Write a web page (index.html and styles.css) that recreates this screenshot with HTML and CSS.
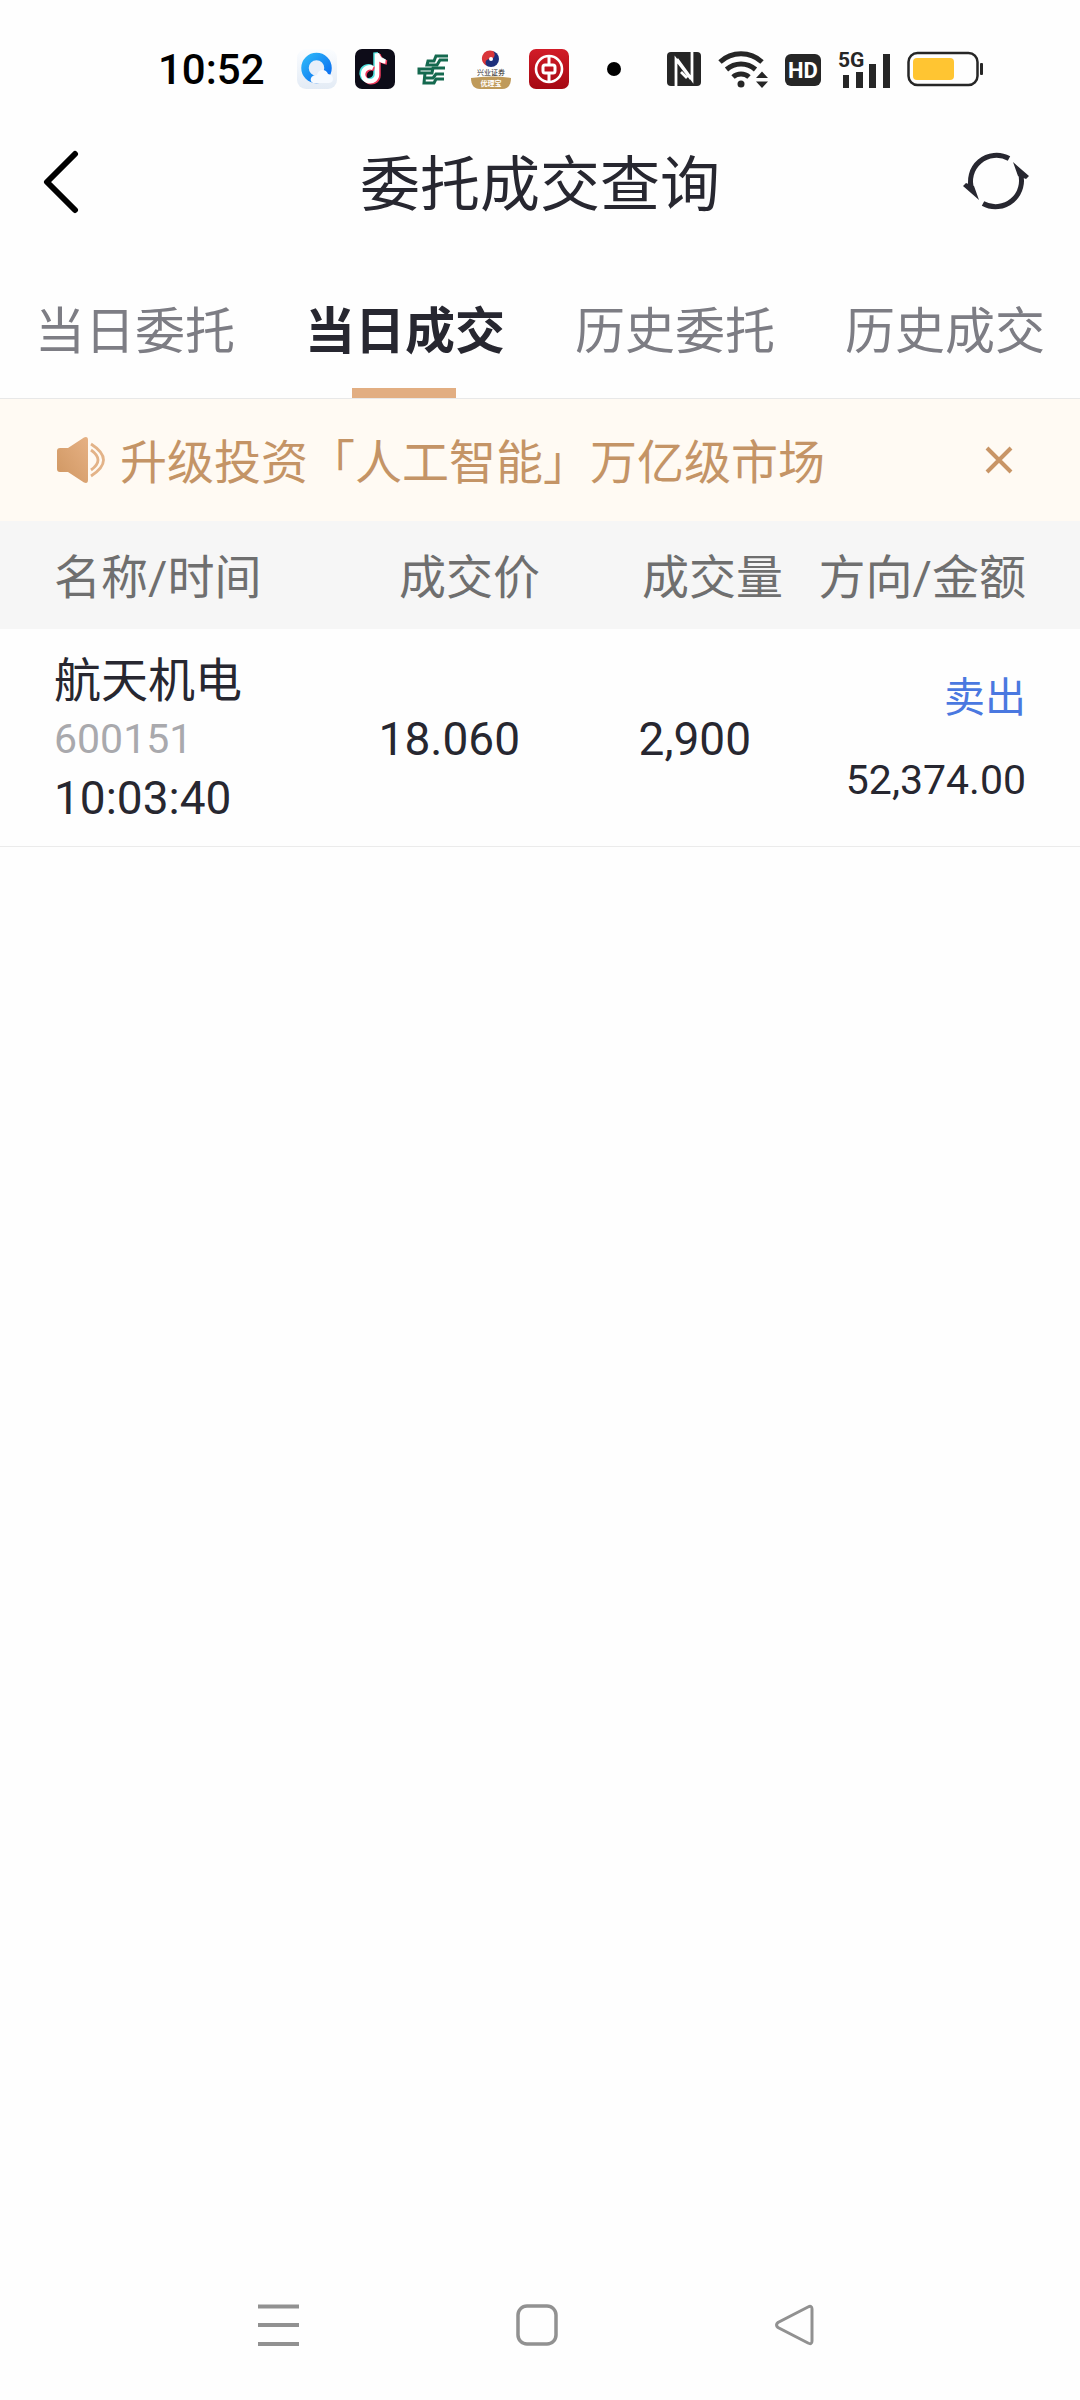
FILE: index.html
```html
<!DOCTYPE html>
<html lang="zh-CN">
<head>
  <meta charset="utf-8">
  <meta name="viewport" content="width=device-width">
  <title>委托成交查询</title>
  <link rel="stylesheet" href="styles.css">
</head>
<body>
  <div class="status-bar">
    <div class="status-left">
      <span class="clock">10:52</span>
      <!-- browser -->
      <svg class="app-icon" viewBox="0 0 40 40">
        <defs>
          <linearGradient id="ring" x1="0" y1="0" x2="1" y2="1">
            <stop offset="0" stop-color="#2cb4f8"/>
            <stop offset="1" stop-color="#0a6cf0"/>
          </linearGradient>
          <linearGradient id="tile" x1="0" y1="0" x2="0" y2="1">
            <stop offset="0" stop-color="#fbfdff"/>
            <stop offset="1" stop-color="#e3ebf5"/>
          </linearGradient>
        </defs>
        <rect width="40" height="40" rx="9" fill="url(#tile)"/>
        <circle cx="19.500" cy="19" r="11.500" fill="#e8effa" stroke="url(#ring)" stroke-width="7.500"/>
        <path d="M16 34c-5-3-1-9 4-8 1-6 9-7 11-1 6 0 7 9 1 9z" fill="#f6faff"/>
      </svg>
      <!-- short video -->
      <svg class="app-icon" viewBox="0 0 40 40">
        <rect width="40" height="40" rx="7" fill="#0d0c18"/>
        <g fill="none" stroke-width="4.500">
          <path d="M18 19a7 7 0 1 0 4 6.500V4.500c1 5 4 7.500 8.500 8" stroke="#4fe0dc" transform="translate(-1.500 -1)"/>
          <path d="M18 19a7 7 0 1 0 4 6.500V4.500c1 5 4 7.500 8.500 8" stroke="#f03a5c" transform="translate(1.500 1)"/>
          <path d="M18 19a7 7 0 1 0 4 6.500V4.500c1 5 4 7.500 8.500 8" stroke="#fff"/>
        </g>
      </svg>
      <!-- postal bank -->
      <svg class="app-icon" viewBox="0 0 40 40" fill="none" stroke="#14694f" stroke-width="3">
        <path d="M35 7H23l-2 5h-6l-1 4h10l3-5h8"/>
        <path d="M32 19H20l-1 5H6v-4h14"/>
        <path d="M12 24l-1 10h10l2-4h8"/>
        <path d="M13 29h7l3-4h8"/>
      </svg>
      <!-- securities -->
      <svg class="app-icon" viewBox="0 0 40 40">
        <circle cx="20" cy="10" r="8" fill="#1d2f7c"/>
        <path d="M22 2a8 8 0 1 0-6 15c-3-4-1-7 3-7 5 0 6-5 3-8z" fill="#d9363a"/>
        <circle cx="20" cy="10" r="2" fill="#fff"/>
        <text class="broker-name" x="20" y="26" text-anchor="middle">兴业证券</text>
        <path d="M0 29q20-3 40 0c0 7-3 11-9 11H9c-6 0-9-4-9-11z" fill="#bf9a5a"/>
        <text class="broker-tag" x="20" y="37" text-anchor="middle">优理宝</text>
      </svg>
      <!-- bank of china -->
      <svg class="app-icon" viewBox="0 0 40 40">
        <defs>
          <linearGradient id="red" x1="0" y1="0" x2="0" y2="1">
            <stop offset="0" stop-color="#d21c28"/>
            <stop offset="1" stop-color="#a50812"/>
          </linearGradient>
        </defs>
        <rect width="40" height="40" rx="7" fill="url(#red)"/>
        <g fill="none" stroke="#fff">
          <circle cx="20" cy="20" r="13" stroke-width="2.600"/>
          <rect x="14" y="16" width="12" height="8" rx="2" stroke-width="3"/>
          <path d="M20 7v8M20 24v9" stroke-width="3"/>
        </g>
      </svg>
      <span class="more-dot"></span>
    </div>
    <div class="status-right">
      <!-- nfc -->
      <svg width="34" height="36" viewBox="0 0 34 36">
        <rect y="1" width="34" height="34" rx="4" fill="#262626"/>
        <path d="M9 35V8.500L24 28M25 1v27.500L10 8M14 21l6 6" fill="none" stroke="#fff" stroke-width="2.800"/>
      </svg>
      <!-- wifi -->
      <svg width="50" height="38" viewBox="0 0 50 38">
        <g fill="none" stroke="#262626" stroke-width="5">
          <path d="M2 12a31 31 0 0 1 42 0"/>
          <path d="M8.500 19.500a22 22 0 0 1 29 0"/>
          <path d="M15 27a12 12 0 0 1 16 0"/>
        </g>
        <circle cx="23" cy="34" r="3.500" fill="#262626"/>
        <path d="M38 28l6-6.500 6 6.500zM38 31.500h12L44 38z" fill="#262626"/>
      </svg>
      <!-- hd -->
      <svg width="36" height="36" viewBox="0 0 36 36">
        <rect y="3" width="36" height="32" rx="6" fill="#262626"/>
        <text class="hd-text" x="18" y="27" text-anchor="middle">HD</text>
      </svg>
      <!-- signal -->
      <svg width="52" height="44" viewBox="0 -4 52 44">
        <text class="net-text" x="0" y="16">5G</text>
        <path d="M5 24h6v13H5zM18 21h7v16h-7zM31 13h7v24h-7zM45 3h7v34h-7z" fill="#262626"/>
      </svg>
      <!-- battery -->
      <svg width="76" height="36" viewBox="0 0 76 36">
        <rect x="1.500" y="2" width="69" height="32" rx="9" fill="none" stroke="#262626" stroke-width="2.500"/>
        <rect x="6" y="7" width="41" height="22" rx="4" fill="#ffc532"/>
        <rect x="73" y="12" width="3" height="12" rx="1" fill="#262626"/>
      </svg>
    </div>
  </div>

  <header class="title-bar">
    <button class="icon-button back" aria-label="返回">
      <svg width="40" height="64" viewBox="0 0 40 64">
        <path d="M34 4L6 32l28 28" fill="none" stroke="#000" stroke-width="6" stroke-linecap="round" stroke-linejoin="round"/>
      </svg>
    </button>
    <h1>委托成交查询</h1>
    <button class="icon-button refresh" aria-label="刷新">
      <svg width="66" height="60" viewBox="0 0 66 60" fill="none" stroke="#272730" stroke-width="5">
        <path d="M46 6.500A26 26 0 0 0 9 38"/>
        <path d="M20 51.500A26 26 0 0 0 57 20"/>
        <path d="M3 31l-3 3 16 14-5-14-3-1z" fill="#272730" stroke="none"/>
        <path d="M63 27l3-3-16-14 5 14 3 1z" fill="#272730" stroke="none"/>
      </svg>
    </button>
  </header>

  <nav class="tabs">
    <a class="tab" href="#">当日委托</a>
    <a class="tab active" href="#">当日成交</a>
    <a class="tab" href="#">历史委托</a>
    <a class="tab" href="#">历史成交</a>
  </nav>

  <div class="notice">
    <svg width="50" height="48" viewBox="0 0 50 48">
      <defs>
        <linearGradient id="horn" x1="1" y1="0" x2="0" y2="1">
          <stop offset="0" stop-color="#e6b184"/>
          <stop offset="1" stop-color="#cf9661"/>
        </linearGradient>
      </defs>
      <path d="M4 12h8L28 1.500Q32 0 32 4v40q0 4-4 2.500L12 36H4q-3 0-3-3V15q0-3 3-3z" fill="url(#horn)"/>
      <path d="M35 14q14 10 0 20M35 8q25 16 0 32" fill="none" stroke="#e3b388" stroke-width="2.800"/>
    </svg>
    <a class="notice-text" href="#">升级投资「人工智能」万亿级市场</a>
    <button class="icon-button" aria-label="关闭">
      <svg width="28" height="28" viewBox="0 0 28 28">
        <path d="M2 2l24 24M26 2L2 26" stroke="#c89566" stroke-width="4"/>
      </svg>
    </button>
  </div>

  <table class="deals">
    <thead>
      <tr>
        <th>名称/时间</th>
        <th>成交价</th>
        <th>成交量</th>
        <th>方向/金额</th>
      </tr>
    </thead>
    <tbody>
      <tr>
        <td>
          <div class="line">航天机电</div>
          <div class="line code">600151</div>
          <div class="line time">10:03:40</div>
        </td>
        <td class="price">18.060</td>
        <td class="volume">2,900</td>
        <td>
          <div class="side sell">卖出</div>
          <div class="side">52,374.00</div>
        </td>
      </tr>
    </tbody>
  </table>

  <div class="system-nav">
    <button class="icon-button" aria-label="最近任务">
      <svg width="42" height="42" viewBox="0 0 42 42">
        <path d="M0 2.500h41M0 21h41M0 40h41" stroke="#919191" stroke-width="4"/>
      </svg>
    </button>
    <button class="icon-button" aria-label="主屏幕">
      <svg width="42" height="42" viewBox="0 0 42 42">
        <rect x="2" y="2" width="38" height="38" rx="9" fill="none" stroke="#919191" stroke-width="3.500"/>
      </svg>
    </button>
    <button class="icon-button" aria-label="返回上一页">
      <svg width="42" height="42" viewBox="0 0 42 42">
        <path d="M34 3L4 18.500q-3 2.500 0 5L34 39q4 2 4-2V5q0-4-4-2z" fill="none" stroke="#919191" stroke-width="3"/>
      </svg>
    </button>
  </div>
</body>
</html>
```
FILE: styles.css
```css
* {
  box-sizing: border-box;
}

body {
  display: flex;
  flex-direction: column;
  min-height: 100vh;
  margin: 0;
  font-family: Roboto, "Noto Sans CJK SC", sans-serif;
  color: #272730;
  background-color: #fefefe;
}

svg {
  display: block;
  flex: none;
}

a {
  color: inherit;
  text-decoration: none;
}

.icon-button {
  padding: 0;
  border: none;
  background: none;
  cursor: pointer;
}

.status-bar {
  display: flex;
  align-items: center;
  justify-content: space-between;
  height: 138px;
  padding: 0 97px 0 158px;
}

.status-left {
  display: flex;
  align-items: center;
  gap: 18px;
}

.status-right {
  display: flex;
  align-items: center;
  gap: 17px;
}

.clock {
  width: 121px;
  font-size: 42px;
  font-weight: 500;
  color: #000;
}

.app-icon {
  width: 40px;
  height: 40px;
}

.broker-name {
  font-family: "Noto Sans CJK SC", sans-serif;
  font-size: 7px;
  fill: #222;
}

.broker-tag {
  font-family: "Noto Sans CJK SC", sans-serif;
  font-size: 7px;
  font-weight: bold;
  fill: #fff;
}

.more-dot {
  width: 14px;
  height: 14px;
  margin-left: 20px;
  border-radius: 50%;
  background-color: #000;
}

.hd-text {
  font-size: 22px;
  font-weight: bold;
  fill: #fff;
}

.net-text {
  font-size: 21px;
  font-weight: bold;
  fill: #262626;
}

.title-bar {
  display: grid;
  grid-template-columns: 1fr auto 1fr;
  align-items: center;
  height: 88px;
}

.back {
  justify-self: start;
  margin-left: 41px;
}

.refresh {
  justify-self: end;
  margin-right: 51px;
}

h1 {
  margin: 0;
  padding-top: 8px;
  font-size: 60px;
  font-weight: normal;
  line-height: 80px;
}

.tabs {
  display: flex;
  height: 173px;
  border-bottom: 1px solid #e8e8e8;
}

.tab {
  position: relative;
  flex: 1;
  padding-top: 64px;
  font-size: 50px;
  line-height: 84px;
  text-align: center;
  color: #7d7d84;
}

.tab.active {
  font-weight: bold;
  color: #272730;
}

.tab.active::after {
  content: "";
  position: absolute;
  bottom: 0;
  left: 50%;
  width: 104px;
  height: 10px;
  margin-left: -53px;
  background-color: #e2ae82;
}

.notice {
  display: flex;
  align-items: center;
  gap: 14px;
  height: 122px;
  padding: 0 67px 0 56px;
  background-color: #fffaf3;
}

.notice-text {
  flex: 1;
  padding-bottom: 4px;
  font-size: 47px;
  color: #c49466;
}

.deals {
  width: 100%;
  table-layout: fixed;
  border-collapse: collapse;
  font-size: 47px;
}

.deals th,
.deals td {
  padding: 0;
  font-weight: normal;
  text-align: right;
  white-space: nowrap;
}

.deals th {
  height: 108px;
  padding-bottom: 4px;
  color: #6f6f6f;
  background-color: #f6f6f6;
}

.deals td {
  height: 217px;
  padding-top: 4px;
  border-bottom: 1px solid #ebebeb;
}

.deals tr > :first-child {
  width: 27.5%;
  padding-left: 54px;
  text-align: left;
}

.deals tr > :last-child {
  width: 27.5%;
  padding-right: 54px;
}

.deals .price {
  padding-right: 20px;
  font-size: 46px;
}

.deals .volume {
  padding-right: 32px;
  font-size: 46px;
}

.line {
  line-height: 59px;
}

.code {
  font-size: 41px;
  color: #a9a9ad;
}

.time {
  font-size: 46px;
}

.side {
  font-size: 41px;
  line-height: 82px;
}

.sell {
  color: #4a78e0;
}

.system-nav {
  display: flex;
  align-items: center;
  justify-content: space-between;
  height: 150px;
  margin-top: auto;
  padding: 0 264px 0 258px;
}
```
